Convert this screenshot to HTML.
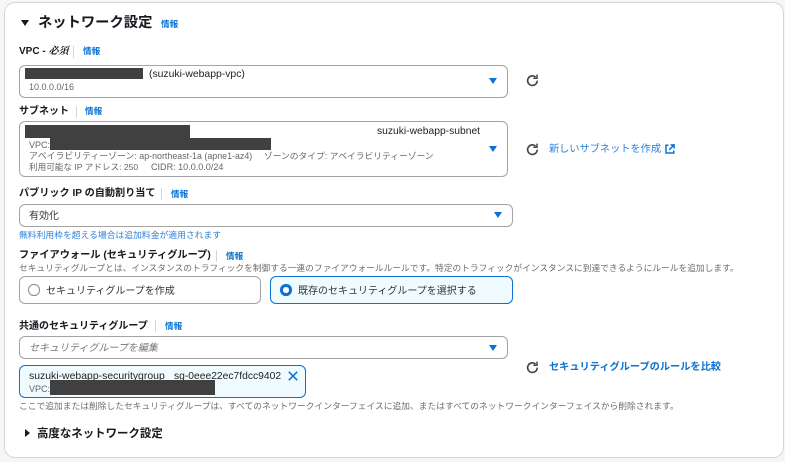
<!DOCTYPE html>
<html lang="ja"><head><meta charset="utf-8">
<style>
html,body{margin:0;padding:0;width:785px;height:462px;overflow:hidden;background:#f6f6f6}
body{position:relative;font-family:"Liberation Sans","Noto Sans CJK JP",sans-serif;color:#16191f}
#w{position:absolute;left:0;top:0;width:785px;height:462px;filter:blur(.3px)}
.a{position:absolute;white-space:nowrap;line-height:14px}
.card{position:absolute;left:4px;top:2px;width:778px;height:454px;background:#fff;border:1px solid #d5d5d5;border-radius:11px}
.box{position:absolute;box-sizing:border-box;border:1px solid #a4a4a4;border-radius:6px;background:#fff}
.l{font-size:10px;font-weight:700;color:#16191f}
.i{font-size:8.6px;font-weight:700;color:#0972d3}
.s{font-size:9px;color:#666}
.d{font-size:8.72px;color:#6d6d6d}
.v{font-size:10px;color:#222}
.sep{position:absolute;width:1px;height:12px;background:#d5d5d5}
.r{position:absolute;background:#404040}
.tri{position:absolute;width:0;height:0;border-left:4.25px solid transparent;border-right:4.25px solid transparent;border-top:6px solid #0972d3}
svg{position:absolute;overflow:visible}
</style></head><body><div id="w">
<div class="card"></div>

<div class="a" style="left:20.5px;top:20px;width:0;height:0;border-left:4.5px solid transparent;border-right:4.5px solid transparent;border-top:6.5px solid #16191f;line-height:0"></div>
<div class="a" style="left:38px;top:14px;font-size:14.3px;font-weight:700;line-height:18px">ネットワーク設定</div>
<div class="a i" style="left:161px;top:17px">情報</div>

<div class="a l" style="left:19px;top:45px">VPC - <i style="font-family:'Liberation Serif','Noto Serif CJK SC',serif">必須</i></div>
<div class="sep" style="left:73px;top:46px"></div>
<div class="a i" style="left:83px;top:44px">情報</div>
<div class="box" style="left:19px;top:64.5px;width:489px;height:33px"></div>
<div class="a" style="left:149px;top:68px;font-size:10.4px;color:#222">(suzuki-webapp-vpc)</div>
<div class="a s" style="left:29px;top:80px">10.0.0.0/16</div>
<div class="r" style="left:25px;top:68px;width:118px;height:10.5px"></div>
<div class="tri" style="left:489px;top:78px"></div>
<svg style="left:526px;top:74px" width="13" height="13" viewBox="0 0 13 13"><path d="M11.2 6.6A4.8 4.8 0 1 1 9.5 3" fill="none" stroke="#444" stroke-width="1.6"/><path d="M11 .6v3.7H7.4" fill="none" stroke="#444" stroke-width="1.5"/></svg>

<div class="a l" style="left:19px;top:104.5px">サブネット</div>
<div class="sep" style="left:76px;top:106px"></div>
<div class="a i" style="left:85px;top:104px">情報</div>
<div class="box" style="left:19px;top:121px;width:489px;height:56px"></div>
<div class="a" style="left:377px;top:125px;font-size:10.3px;color:#222">suzuki-webapp-subnet</div>
<div class="a s" style="left:29px;top:138px">VPC:</div>
<div class="a s" style="left:29px;top:149px;font-size:8.88px">アベイラビリティーゾーン: ap-northeast-1a (apne1-az4)</div>
<div class="a s" style="left:264px;top:149px;font-size:8.75px">ゾーンのタイプ: アベイラビリティーゾーン</div>
<div class="a s" style="left:29px;top:160px;font-size:8.6px">利用可能な IP アドレス: 250</div>
<div class="a s" style="left:151px;top:160px;font-size:9.05px">CIDR: 10.0.0.0/24</div>
<div class="r" style="left:25px;top:125px;width:165px;height:13px"></div>
<div class="r" style="left:50px;top:138px;width:221px;height:12px"></div>
<div class="tri" style="left:489px;top:146px"></div>
<svg style="left:526px;top:143px" width="13" height="13" viewBox="0 0 13 13"><path d="M11.2 6.6A4.8 4.8 0 1 1 9.5 3" fill="none" stroke="#444" stroke-width="1.6"/><path d="M11 .6v3.7H7.4" fill="none" stroke="#444" stroke-width="1.5"/></svg>
<div class="a" style="left:549px;top:142.5px;font-size:10.2px;color:#2f80dc">新しいサブネットを作成</div>
<svg style="left:665px;top:144px" width="10" height="10" viewBox="0 0 10 10"><path d="M3.5 1.2H1v7.8h7.8V6.5" fill="none" stroke="#0972d3" stroke-width="1.5"/><path d="M5.5 .9h3.6v3.6M9 1 4.2 5.8" fill="none" stroke="#0972d3" stroke-width="1.5"/></svg>

<div class="a l" style="left:19px;top:187px;font-size:10.15px">パブリック IP の自動割り当て</div>
<div class="sep" style="left:161px;top:188px"></div>
<div class="a i" style="left:171px;top:187px">情報</div>
<div class="box" style="left:19px;top:204px;width:494px;height:23px"></div>
<div class="a" style="left:29px;top:209.5px;font-size:10px;color:#333">有効化</div>
<div class="tri" style="left:494px;top:212px"></div>
<div class="a" style="left:19px;top:228px;font-size:8.8px;color:#2f80dc">無料利用枠を超える場合は追加料金が適用されます</div>

<div class="a l" style="left:19px;top:249px;font-size:10.2px">ファイアウォール (セキュリティグループ)</div>
<div class="sep" style="left:216px;top:250px"></div>
<div class="a i" style="left:226px;top:249px">情報</div>
<div class="a d" style="left:19px;top:260.5px">セキュリティグループとは、インスタンスのトラフィックを制御する一連のファイアウォールルールです。特定のトラフィックがインスタンスに到達できるようにルールを追加します。</div>

<div class="box" style="left:19px;top:276px;width:242px;height:28px"></div>
<div style="position:absolute;box-sizing:border-box;left:28px;top:284px;width:11.5px;height:11.5px;border:1px solid #8a8a8a;border-radius:50%"></div>
<div class="a" style="left:46px;top:284.5px;font-size:10px;color:#333">セキュリティグループを作成</div>
<div class="box" style="left:270px;top:276px;width:243px;height:28px;background:#f0fbff;border:1.5px solid #0972d3"></div>
<div style="position:absolute;box-sizing:border-box;left:280px;top:284px;width:11.5px;height:11.5px;border:3.5px solid #0972d3;border-radius:50%;background:#fff"></div>
<div class="a" style="left:298px;top:284.5px;font-size:10px;color:#333">既存のセキュリティグループを選択する</div>

<div class="a l" style="left:19px;top:319.5px">共通のセキュリティグループ</div>
<div class="sep" style="left:155px;top:320px"></div>
<div class="a i" style="left:165px;top:319px">情報</div>
<div class="box" style="left:19px;top:336px;width:489px;height:23px"></div>
<div class="a" style="left:29px;top:341.5px;font-size:10px;font-style:italic;color:#777">セキュリティグループを編集</div>
<div class="tri" style="left:489px;top:345px"></div>
<svg style="left:526px;top:361px" width="13" height="13" viewBox="0 0 13 13"><path d="M11.2 6.6A4.8 4.8 0 1 1 9.5 3" fill="none" stroke="#444" stroke-width="1.6"/><path d="M11 .6v3.7H7.4" fill="none" stroke="#444" stroke-width="1.5"/></svg>
<div class="a" style="left:549px;top:361px;font-size:10.2px;font-weight:700;color:#0972d3">セキュリティグループのルールを比較</div>

<div class="box" style="left:19px;top:365px;width:287px;height:33px;background:#f0fbff;border:1.2px solid #0972d3"></div>
<div class="a" style="left:29px;top:369.5px;font-size:10.45px;color:#222">suzuki-webapp-securitygroup</div>
<div class="a" style="left:174px;top:369.5px;font-size:10.3px;color:#222">sg-0eee22ec7fdcc9402</div>
<div class="a s" style="left:29px;top:382px">VPC:</div>
<div class="r" style="left:50px;top:380px;width:165px;height:15px"></div>
<svg style="left:288px;top:371px" width="10" height="10" viewBox="0 0 10 10"><path d="M.8.8 9.2 9.2M9.2.8.8 9.2" fill="none" stroke="#0972d3" stroke-width="1.5"/></svg>

<div class="a d" style="left:19px;top:399px;font-size:8.75px">ここで追加または削除したセキュリティグループは、すべてのネットワークインターフェイスに追加、またはすべてのネットワークインターフェイスから削除されます。</div>

<div class="a" style="left:25px;top:429px;width:0;height:0;border-top:4px solid transparent;border-bottom:4px solid transparent;border-left:5.5px solid #16191f;line-height:0"></div>
<div class="a" style="left:37px;top:426px;font-size:11.45px;font-weight:700;line-height:16px">高度なネットワーク設定</div>
</div></body></html>
